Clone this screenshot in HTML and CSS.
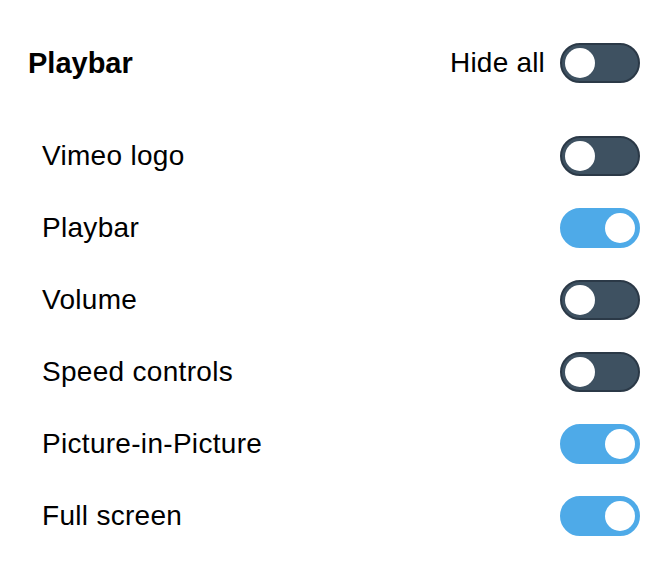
FILE: index.html
```html
<!DOCTYPE html>
<html>

<head>
    <meta charset="UTF-8">
    <meta name="viewport" content="width=device-width, initial-scale=1.0">
    <title>Playbar settings</title>
    <link rel="stylesheet" href="styles.css">
</head>

<body>
    <div class="panel">
        <div class="panel-header">
            <h2 class="panel-title">Playbar</h2>
            <label class="hide-all">
                <span>Hide all</span>
                <span class="toggle"></span>
            </label>
        </div>
        <ul class="option-list">
            <li class="option"><span>Vimeo logo</span><span class="toggle"></span></li>
            <li class="option"><span>Playbar</span><span class="toggle on"></span></li>
            <li class="option"><span>Volume</span><span class="toggle"></span></li>
            <li class="option"><span>Speed controls</span><span class="toggle"></span></li>
            <li class="option"><span>Picture-in-Picture</span><span class="toggle on"></span></li>
            <li class="option"><span>Full screen</span><span class="toggle on"></span></li>
        </ul>
    </div>
</body>

</html>
```

FILE: styles.css
```css
body {
    margin: 0;
    background-color: #ffffff;
    font-family: "Liberation Sans", Arial, sans-serif;
    color: #000000;
}

.panel {
    padding: 43px 30px 0 28px;
}

.panel-header {
    display: flex;
    align-items: center;
    justify-content: space-between;
    height: 40px;
}

.panel-title {
    margin: 0;
    font-size: 29px;
    font-weight: bold;
    letter-spacing: 0;
}

.hide-all {
    display: flex;
    align-items: center;
    gap: 15px;
    font-size: 28px;
    letter-spacing: 0.2px;
}

.option-list {
    list-style: none;
    margin: 37px 0 0 0;
    padding: 0 0 0 14px;
}

.option {
    display: flex;
    align-items: center;
    justify-content: space-between;
    height: 72px;
    font-size: 28px;
    letter-spacing: 0.3px;
}

.toggle {
    position: relative;
    display: inline-block;
    width: 80px;
    height: 40px;
    box-sizing: border-box;
    border-radius: 20px;
    background-color: #3e5161;
    border: 2px solid #2b3947;
}

.toggle::after {
    content: "";
    position: absolute;
    top: 3px;
    left: 3px;
    width: 30px;
    height: 30px;
    border-radius: 50%;
    background-color: #ffffff;
}

.toggle.on {
    background-color: #4eaae8;
    border-color: #4eaae8;
}

.toggle.on::after {
    left: auto;
    right: 3px;
}
```
